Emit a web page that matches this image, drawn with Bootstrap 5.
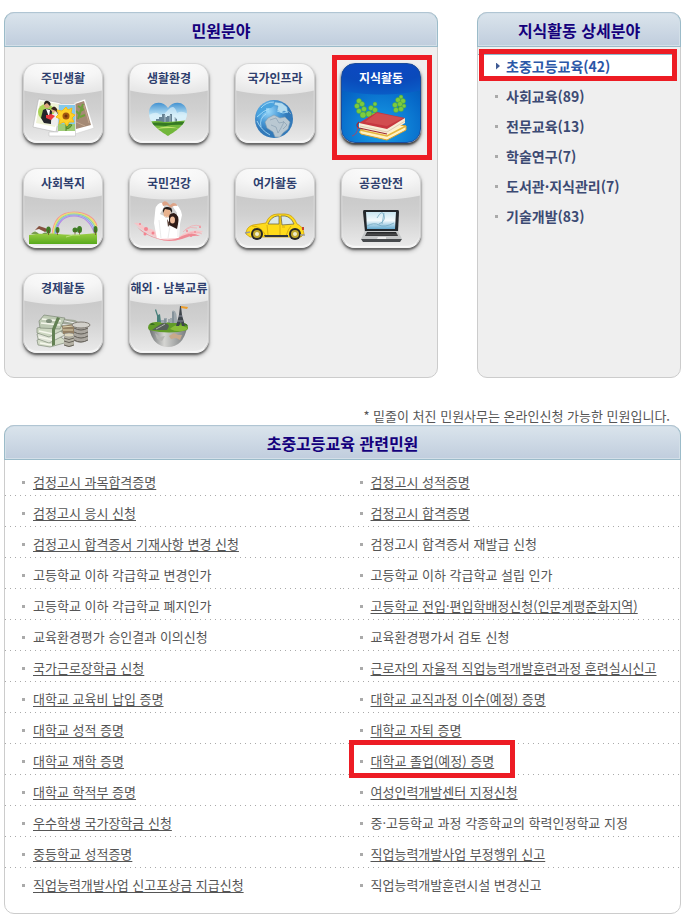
<!DOCTYPE html>
<html lang="ko">
<head>
<meta charset="utf-8">
<meta name="viewport" content="width=device-width, initial-scale=1">
<title>민원분야</title>
<link href="https://cdn.jsdelivr.net/npm/bootstrap@5.3.0/dist/css/bootstrap.min.css" rel="stylesheet">
<style>
  body { font-family: "Noto Sans CJK KR", sans-serif; font-size: 13px; line-height: 18px; color: #555; background: #fff; }
  .page { padding: 12px 7px 5px 4px; }
  .top-panels { display: grid; grid-template-columns: 434fr 204fr; column-gap: 39px; }
  .panel { border: 1px solid #ccc; border-radius: 10px; }
  .panel-gray { background: #efefef; min-height: 366px; }
  .panel-title { margin: -1px -1px 0; height: 35px; border: 1px solid #9bbbc9; border-top-color: #b0c5d3; border-radius: 10px 10px 0 0;
    background: linear-gradient(#dae4ec, #c0cddd); box-shadow: inset 0 0 0 1px #d3dfe8; font-size: 16px; line-height: 20px; color: #14007c; }
  .tiles { display: grid; grid-template-columns: repeat(4, 80px); justify-content: space-between; row-gap: 25px; padding: 16px 16px 0 18px; }
  .tile { height: 80px; border-radius: 14px; border: 1px solid #cfcfcf; border-top-color: #d8d8d8; border-bottom-color: #f4f4f4;
    background: radial-gradient(ellipse 80px 31px at 50% 0, #fdfdfd 0, #f6f6f6 50%, #e6e6e6 97%, transparent 100%), linear-gradient(#cacaca 28px, #d0d0d0 45px, #eaeaea);
    box-shadow: inset 0 -1px 1px #fafafa, 0 2px 2px #666, 0 3px 4px #aaa; color: #2f3f6e; font-size: 12px; line-height: 18px; padding-top: 5px; }
  .tile svg { width: 80px; height: 50px; margin: 4px -1px 0; flex: none; }
  .tile-on { color: #fff; border-color: #1a4c9c;
    background: radial-gradient(ellipse 80px 31px at 50% 0, #0d47c4 0, #0a4abb 60%, #0a5cc6 97%, transparent 100%), radial-gradient(circle at 50% 85%, #19a0e8, #0668c8 60%, #0448a8);
    box-shadow: 0 2px 2px #444, 0 3px 4px #999; }
  .frame { position: absolute; border: 5px solid #ed1c24; pointer-events: none; }
  .frame-tile { inset: -9px -12px -18px -10px; }
  .frame-side { inset: -2px 3px 0 1px; }
  .frame-link { inset: -12px -21px -8px -22px; }
  .side-list { padding-top: 4px; font-size: 14px; }
  .side-list li { height: 30px; padding-left: 17px; }
  .side-list a { color: #3c4a73; }
  .side-list .current { background: linear-gradient(#8eb8cc, #8eb8cc) 0 3px / 100% 1px no-repeat, linear-gradient(#fff, #fff) 0 4px no-repeat; margin-right: 8px; }
  .side-list .current .frame-side { right: -5px; }
  .side-list .current a { color: #2b57a7; }
  .dot { width: 3px; height: 3px; background: #aaa; margin-right: 8px; flex: none; }
  .arrow { width: 4px; height: 7px; background: #3f5a94; clip-path: polygon(0 0, 100% 50%, 0 100%); margin: 0 6px 0 1px; flex: none; }
  .note { margin: 29px 11px 0 0; }
  .services { padding: 5px 0 14px; }
  .services li { height: 31px; padding: 3px 0 0 17px;
    background: linear-gradient(90deg, #aaa 1px, transparent 1px) 0 100% / 5px 1px repeat-x; white-space: nowrap; }
  .services li:nth-last-child(-n+2) { background: none; }
  .services a { color: #555; text-underline-offset: 2px; }
</style>
</head>
<body>
<main class="page">
  <div class="top-panels">
    <section class="panel panel-gray">
      <h2 class="panel-title d-flex align-items-center justify-content-center fw-bold">민원분야</h2>
      <nav class="tiles" aria-label="민원분야">
        <a href="#" class="tile d-flex flex-column align-items-center fw-bold text-decoration-none">주민생활
          <svg viewBox="0 0 80 50" aria-hidden="true">
            <path d="M51 12 62 8 71 37 52 43Z" fill="#fff" stroke="#ccc" stroke-width=".5"/><path d="M52 13 61 10 68 34 53 38Z" fill="#a58a75"/>
            <path d="M55 28 60 13M56 23l-3-3M57 20l4-2M57 26l5-2M58 17l-3-2" stroke="#6da23a" stroke-width="2" fill="none"/><path d="M61 14 66 32M53 31l9 4" stroke="#c2a78f" fill="none"/>
            <path d="M15.500 8 38 12 33 41 10 36Z" fill="#fff" stroke="#aaa" stroke-width=".5"/><path d="M17 10 36 13 32 36 13 32Z" fill="#f0f3d7"/>
            <circle cx="23" cy="21" r="8" fill="#abd357"/><circle cx="24" cy="14" r="3" fill="#dda67d"/><path d="M21 14q0-5 4-4 4 2 2 5l-3-3Z" fill="#26201d"/>
            <path d="M20 19q5-3 9 1l-1 13-7-1-3-5Z" fill="#25262b"/><path d="m23 18 4 1-1 7Z" fill="#fff"/><circle cx="31" cy="19" r="2.500" fill="#e5b08b"/><path d="M28 18q3-5 6 0l1 6-2-4Z" fill="#35221d"/><path d="m29 23 5 0 2 12-8-1Z" fill="#eee"/><path d="m23 24 3 0 2-1 4 2-4 4-5-2Z" fill="#ed3a3f"/>
            <path d="M36 13H52.500V45H26V41H35Z" fill="#fff" stroke="#bbb" stroke-width=".5"/><path d="M36 14H52V40H35Z" fill="#85c9eb"/><path d="M35 33H52V40H35Z" fill="#9fcc77"/>
            <path d="M43 29V40M43 37q3-5 6-3-2 4-6 4" stroke="#55862a" fill="#72a63d"/>
            <path d="m43 16 2 3 4-2-1 5 4 2-3 3 2 4-5 0-2 4-3-4-5 2 1-5-4-2 3-3-2-4 5 1Z" fill="#ffd12a" stroke="#f5bb14"/><circle cx="43" cy="25" r="3.500" fill="#a4560f"/><circle cx="43" cy="25" r="1.500" fill="#6a340c"/>
          </svg></a>
        <a href="#" class="tile d-flex flex-column align-items-center fw-bold text-decoration-none">생활환경
          <svg viewBox="0 0 80 50" aria-hidden="true">
            <defs><clipPath id="heart"><path d="M39 45C33 41 20 34 20 22 20 10 34 9 39 17 44 9 58 10 58 22 58 34 45 41 39 45Z"/></clipPath>
            <linearGradient id="heartSky" x2="0" y2="1"><stop stop-color="#1d78c5"/><stop offset=".6" stop-color="#c5e9f7"/></linearGradient></defs>
            <g clip-path="url(#heart)"><path d="M18 8H60V36H18Z" fill="url(#heartSky)"/><path d="M20 24q7-4 10-1t9-4 9 3q5-3 11 1v8H20Z" fill="#e5f5fc" opacity=".6"/>
            <path d="M27 33V28h3v2-4h3v4-7h3v7-4h2v4-5h3v-2h2v8h3v-4l2 1v5-2h3v4Z" fill="#678395"/><path d="M36 24v8M41 24v8M46 26v6" stroke="#a9bec8"/>
            <path d="M18 31q8-2 17 0 12 0 25-2V46H18Z" fill="#72b73b"/><path d="M18 32q12-1 22 0 10-2 19-1v3q-16-1-22 1-9-1-19 0Z" fill="#357924"/><path d="M27 38q10-5 25 0-9-2-25 0" fill="#c4e270"/></g>
          </svg></a>
        <a href="#" class="tile d-flex flex-column align-items-center fw-bold text-decoration-none">국가인프라
          <svg viewBox="0 0 80 50" aria-hidden="true">
            <defs><radialGradient id="globe" cx=".35" cy=".3"><stop stop-color="#9ad8fa"/><stop offset=".6" stop-color="#4a9bd8"/><stop offset="1" stop-color="#3279b9"/></radialGradient></defs>
            <circle cx="39" cy="28" r="19" fill="url(#globe)"/>
            <path d="M23 19q5-7 12-8l5 3-4 3-5 0 0 4-4 2-2 5-3-3Z" fill="#4aa4df"/>
            <path d="m40 11 7 1 5 4 1 6-4-2-3 2-4-3 1-4-4-1Z" fill="#b3dbef" stroke="#4a92c6" stroke-width=".5"/>
            <path d="m33 27 6-3 6 3 5-1 5 5-2 7-5 4-3 4-5 0-2-5-6-4-2-6Z" fill="#b9c8d2" stroke="#7e9bb0" stroke-width=".6"/><path d="m35 29 6-2 3 5 5-1-3 6-3 5-2-6-5-2M48 30l4 4-4 4M53 20l3 3" stroke="#8fa5b6" stroke-width=".8" fill="none"/>
            <path d="M22 30q4 9 13 14M26 17q5-6 13-6M22 26q7-7 12-8M26 36q-2-9 5-13M42 20l6 2 5-1" stroke="#b2e2fa" stroke-width=".8" fill="none"/>
          </svg></a>
        <a href="#" class="tile tile-on position-relative d-flex flex-column align-items-center fw-bold text-decoration-none">지식활동
          <svg viewBox="0 0 80 50" aria-hidden="true">
            <path d="M28 27 18 10M27 26l7-13M57 20l2-14" stroke="#3f9c2c" stroke-width=".8"/>
            <g fill="#7ccb40" stroke="#48a52e" stroke-width=".4"><circle cx="18" cy="10" r="2.500"/><circle cx="16" cy="15" r="2.500"/><circle cx="21" cy="13" r="2.500"/><circle cx="18" cy="20" r="2.500"/><circle cx="23" cy="18" r="2.500"/><circle cx="22" cy="24" r="3"/><circle cx="28" cy="23" r="3"/><circle cx="34" cy="13" r="2"/><circle cx="30" cy="17" r="2.500"/><circle cx="34" cy="19" r="2.500"/><circle cx="33" cy="24" r="2.500"/>
            <circle cx="60" cy="6" r="2"/><circle cx="57" cy="9" r="2.500"/><circle cx="62" cy="10" r="2.500"/><circle cx="54" cy="14" r="2.500"/><circle cx="59" cy="13" r="2.500"/><circle cx="63" cy="15" r="2"/><circle cx="55" cy="19" r="2.500"/><circle cx="60" cy="18" r="2.500"/></g>
            <path d="M20 39 37 31 65 35v4L46 49 20 43q-3-2 0-4Z" fill="#fff2c3" stroke="#e2a526" stroke-width="1"/><path d="M19 39 46 45 65 35" stroke="#e5b53a" stroke-width="1.500" fill="none"/>
            <path d="M18 32v5L46 43 64 32V27Z" fill="#f8ecd6"/><path d="M19 35 46 41 64 30" stroke="#cbb89a" stroke-width=".6" fill="none"/>
            <path d="M18 32 36 21 64 27 46 38Z" fill="#c63740"/><path d="M36 22 62 27 46 35 24 31Z" fill="#da5c5c" opacity=".6"/>
            <path d="M18 31q-4 4 0 6L46 43" stroke="#9e2a35" stroke-width="1.200" fill="none"/><path d="M17 36q-1 8-6 9" stroke="#c9394e" stroke-width=".8" fill="none"/>
          </svg><span class="frame frame-tile"></span></a>
        <a href="#" class="tile d-flex flex-column align-items-center fw-bold text-decoration-none">사회복지
          <svg viewBox="0 0 80 50" aria-hidden="true">
            <defs><linearGradient id="grass" x2="0" y2="1"><stop stop-color="#9dcf45"/><stop offset="1" stop-color="#57a91d"/></linearGradient></defs>
            <g fill="none" stroke-width="1.200"><path d="M29 40C30 22 39 16 51 16S72 22 74 30" stroke="#f59a92"/><path d="M30 40C31 23 40 17 51 17S71 23 74 32" stroke="#f4e35f"/><path d="M31 40C32 24 40 18 51 18S70 24 74 35" stroke="#96d892"/><path d="M32 40C33 25 41 19 51 19S69 25 73 37" stroke="#86a9f1"/><path d="M33 40C34 26 41 20 51 20S68 26 72 39" stroke="#b58ae8"/></g>
            <path d="M6 39q15-3 29-1t39-1V48H6Z" fill="url(#grass)"/>
            <path d="M13 37V34l4-3 5 2v5Z" fill="#eee"/><path d="m12 34 4-4 6 2 4 2-4 2-6-3Z" fill="#85513f"/><path d="M8 38q4-5 8 0M19 38q3-3 6 0" fill="#7b9d51"/>
            <g fill="#3f7d25"><ellipse cx="25.500" cy="34" rx="2.300" ry="3.500"/><ellipse cx="34.500" cy="34" rx="2" ry="3"/><circle cx="52" cy="34" r="2.500"/><ellipse cx="56.500" cy="33.500" rx="2.500" ry="3.500"/><ellipse cx="72.500" cy="33.500" rx="2" ry="3.500"/></g><path d="M25.500 34v5M34.500 34v5M52 34v5M56.500 34v5M72.500 34v5" stroke="#694925" stroke-width=".7"/>
            <path d="M43 41q7-3 14-2" stroke="#bbe17a" fill="none"/>
          </svg></a>
        <a href="#" class="tile d-flex flex-column align-items-center fw-bold text-decoration-none">국민건강
          <svg viewBox="0 0 80 50" aria-hidden="true">
            <path d="M5 27q7-1 11 5 8 0 14 6 16 7 24 0 8-5 20-3-4 4-10 3-7 0-13 5-12 5-25-2Q14 35 5 27Z" fill="#fbc2c6" opacity=".8"/>
            <path d="M36 7 31 7Q26 9 26 17L25 27 28 43 50 42 51 28 53 19Q51 9 45 8L44 11 48 17 47 23 35 20 31 18 35 11Z" fill="#fff"/>
            <path d="M30 24 32 42M49 25l0 16M41 30 39 42" stroke="#ddd" stroke-width=".6"/>
            <path d="M33 7q2-3 5-1l3 3 3-2q4 0 4 3-4-1-6 2l-4-3-4 1Z" fill="#dda488"/>
            <ellipse cx="38" cy="17" rx="3.500" ry="5" fill="#e8b28e"/><path d="M34 17q-1-7 5-6 5 0 4 6l-2-3-5-1Z" fill="#241c19"/>
            <path d="M40 23q-1-6 5-6 6 2 4 11l-1 5-8-4Z" fill="#2e1c18"/><ellipse cx="43.500" cy="24" rx="2.500" ry="3.500" fill="#efbd9d"/><path d="M36 21q2 1 3 0" stroke="#fff"/><path d="m38 23 3 5-2 3Z" fill="#594137"/>
            <path d="M8 31q11 9 23 12t22-3q10-5 18 0-9-1-18 3-13 4-24 0Q15 39 8 31Z" fill="#ee8a94"/>
            <g fill="#f48490"><circle cx="11" cy="28" r="1"/><circle cx="17" cy="33" r="2"/><circle cx="16" cy="38" r="1.500"/><circle cx="24" cy="37" r="1.500"/><circle cx="58" cy="35" r="1"/><circle cx="66" cy="36" r="1"/><circle cx="71" cy="31" r="1"/><circle cx="62" cy="40" r="1"/></g><path d="M54 36q8-9 18-6M58 38q9-4 15 0M56 34q5-4 12-2" stroke="#f4a9af" stroke-width=".7" fill="none"/>
          </svg></a>
        <a href="#" class="tile d-flex flex-column align-items-center fw-bold text-decoration-none">여가활동
          <svg viewBox="0 0 80 50" aria-hidden="true">
            <path d="M11 38Q11 31 18 29L31 27Q34 18 43 18H50Q58 18 62 28 68 30 69 38L66 41H15Z" fill="#ffdb1a" stroke="#c99e0c" stroke-width=".8"/>
            <path d="M33 28q3-7 9-8h2v8ZM46 20h4q6 1 9 8l-12 1Z" fill="#dbe8e9" stroke="#736c42" stroke-width=".8"/><path d="M45 20v19M32 29 33 39M47 31h3M17 30q9 0 14 10M56 30q-3 3-5 10" stroke="#c79c0c" stroke-width=".7" fill="none"/>
            <path d="M29 39H53V41H30Z" fill="#30343b"/><circle cx="22" cy="38" r="6" fill="#252626"/><circle cx="60" cy="38" r="6" fill="#252626"/><circle cx="22" cy="38" r="4" fill="#c1a82d"/><circle cx="60" cy="38" r="4" fill="#c1a82d"/><circle cx="22" cy="38" r="2" fill="#f0eecb"/><circle cx="60" cy="38" r="2" fill="#f0eecb"/><path d="M67 31h2v3h-2Z" fill="#c9442c"/><path d="M10 37l5-1M65 39h5" stroke="#999" stroke-width="1.500"/>
          </svg></a>
        <a href="#" class="tile d-flex flex-column align-items-center fw-bold text-decoration-none">공공안전
          <svg viewBox="0 0 80 50" aria-hidden="true">
            <defs><linearGradient id="screen" x2="0" y2="1"><stop stop-color="#c9e5f0"/><stop offset=".5" stop-color="#f3fafc"/><stop offset="1" stop-color="#67acd1"/></linearGradient></defs>
            <path d="M23 14H57Q58 14 58 16L57 36H24L22 16Q22 14 23 14Z" fill="#23272b"/><path d="M25 16H55L54 33H26Z" fill="url(#screen)"/><path d="M26 30q7-4 12-1t15-2M36 22q5-9 7-3t-5 9M43 17l-2 11" stroke="#73a9c2" stroke-width=".8" fill="none"/>
            <path d="M24 35H57L61 43H20Z" fill="#c5c7c8"/><path d="M26 36H55L57 40H24Z" fill="#27292b"/><path d="M26 38H56M25 39H57" stroke="#777" stroke-width=".5"/><path d="M37 41h8v2h-9Z" fill="#eee"/><path d="M20 43H61L59 46H22Z" fill="#474a4d"/>
          </svg></a>
        <a href="#" class="tile d-flex flex-column align-items-center fw-bold text-decoration-none">경제활동
          <svg viewBox="0 0 80 50" aria-hidden="true">
            <path d="m34 17 18 2 5 3-6 12-18-4Z" fill="#a0a698"/><path d="m37 19 15 3M36 23l15 2M36 27l14 2" stroke="#eee"/>
            <g stroke="#727e6b" stroke-width=".6"><path d="M14 39 33 33 45 41 27 46 15 44Z" fill="#d4dcc8"/><path d="M14 33 34 27 42 34 26 42 15 38Z" fill="#e0e4d8"/><path d="M14 27 34 22 42 28 26 36 14 32Z" fill="#cdd7c1"/><path d="M16 20 21 14 42 17 37 28 17 27Z" fill="#becab4"/></g>
            <path d="M19 18 38 20M18 22 37 24M16 30 30 33M16 36 30 39M17 42l12 2" stroke="#f5f7ec" stroke-width="1.500"/><path d="m34 16-5 12v17l3-1V29l5-12Z" fill="#638153"/><ellipse cx="26" cy="20" rx="3" ry="2" fill="#7e8e79"/>
            <path d="M39 25 51 23 52 33H40Z" fill="#938064"/><path d="M40 26l10-1M40 29h10" stroke="#e1d6b2"/>
            <path d="M51 25V40q7 4 14-1V24Z" fill="#aaa69f"/><path d="M51 27q7 4 14 0M51 31q7 4 14 0M51 35q7 4 14 0M51 39q7 4 14 0" stroke="#625f58" stroke-width="1" fill="none"/><ellipse cx="58" cy="24" rx="9" ry="3" fill="#d2d0ca" stroke="#827d75"/>
            <path d="M41 34V44q5 4 10 0V34Z" fill="#b5b2a5"/><path d="M41 37q5 3 10 0M41 40q5 3 10 0M41 44q5 3 10 0" stroke="#67645b" fill="none"/><ellipse cx="46" cy="34" rx="5" ry="2" fill="#ddd7bf" stroke="#888" stroke-width=".6"/>
          </svg></a>
        <a href="#" class="tile d-flex flex-column align-items-center fw-bold text-decoration-none text-nowrap">해외 · 남북교류
          <svg viewBox="0 0 80 50" aria-hidden="true">
            <defs><linearGradient id="bowl"><stop stop-color="#686c6e"/><stop offset=".4" stop-color="#d5d5d2"/><stop offset="1" stop-color="#777b7d"/></linearGradient></defs>
            <path d="M20 27H58Q54 46 39 46T20 27Z" fill="url(#bowl)"/><path d="m40 35 5-3 4 2 4 0-2 5-4-2-5 1Z" fill="#c8a98b"/><path d="M26 32l5 4 5-1-3 5-5-2Z" fill="#b4b5b2"/>
            <path d="M19 27q0-6 8-6l29 1q5 4 2 7-17 5-38 0Z" fill="#619b29"/><path d="M23 29Q31 23 35 22q8 1 3 7Z" fill="#555e58"/><path d="M27 28q6-3 9-5" stroke="#eee" stroke-width=".6"/><path d="M41 28q7-7 15-2 4 1 1 3-8 3-16-1" fill="#88bc37"/>
            <path d="m28 21 0-6-2-6 1-1 2 6 2-1 1 8Z" fill="#477f7a"/><path d="M32 22v-3h3v-2h3v5h3V17h2V10q5-3 5 12Z" fill="#9da7ad"/><path d="M44 11v11M36 18v4M40 18v4" stroke="#6d7d87"/>
            <path d="M51 5h1l1 9 3 11h-3l-1-4-2 4h-3l3-11Z" fill="#3e454b"/><path d="M49 15h5M48 20h6" stroke="#aab" stroke-width=".7"/><path d="m52 5 7 1-1 2-6-1Z" fill="#ed9c29"/><path d="M21 24q2-4 5 0M55 24q2-3 4 1" fill="#396c21"/>
          </svg></a>
      </nav>
    </section>

    <section class="panel panel-gray">
      <h2 class="panel-title d-flex align-items-center justify-content-center fw-bold">지식활동 상세분야</h2>
      <ul class="side-list list-unstyled mb-0 fw-bold">
        <li class="current position-relative d-flex align-items-center"><span class="arrow"></span><a class="text-decoration-none" href="#">초중고등교육(42)</a><span class="frame frame-side"></span></li>
        <li class="d-flex align-items-center"><span class="dot"></span><a class="text-decoration-none" href="#">사회교육(89)</a></li>
        <li class="d-flex align-items-center"><span class="dot"></span><a class="text-decoration-none" href="#">전문교육(13)</a></li>
        <li class="d-flex align-items-center"><span class="dot"></span><a class="text-decoration-none" href="#">학술연구(7)</a></li>
        <li class="d-flex align-items-center"><span class="dot"></span><a class="text-decoration-none" href="#">도서관·지식관리(7)</a></li>
        <li class="d-flex align-items-center"><span class="dot"></span><a class="text-decoration-none" href="#">기술개발(83)</a></li>
      </ul>
    </section>
  </div>

  <p class="note text-end">* 밑줄이 처진 민원사무는 온라인신청 가능한 민원입니다.</p>

  <section class="panel">
    <h2 class="panel-title d-flex align-items-center justify-content-center fw-bold mb-0">초중고등교육 관련민원</h2>
    <ul class="services row row-cols-2 g-0 list-unstyled mb-0">
      <li class="d-flex align-items-center"><span class="dot"></span><a href="#">검정고시 과목합격증명</a></li>
      <li class="d-flex align-items-center"><span class="dot"></span><a href="#">검정고시 성적증명</a></li>
      <li class="d-flex align-items-center"><span class="dot"></span><a href="#">검정고시 응시 신청</a></li>
      <li class="d-flex align-items-center"><span class="dot"></span><a href="#">검정고시 합격증명</a></li>
      <li class="d-flex align-items-center"><span class="dot"></span><a href="#">검정고시 합격증서 기재사항 변경 신청</a></li>
      <li class="d-flex align-items-center"><span class="dot"></span>검정고시 합격증서 재발급 신청</li>
      <li class="d-flex align-items-center"><span class="dot"></span>고등학교 이하 각급학교 변경인가</li>
      <li class="d-flex align-items-center"><span class="dot"></span>고등학교 이하 각급학교 설립 인가</li>
      <li class="d-flex align-items-center"><span class="dot"></span>고등학교 이하 각급학교 폐지인가</li>
      <li class="d-flex align-items-center"><span class="dot"></span><a href="#">고등학교 전입·편입학배정신청(인문계평준화지역)</a></li>
      <li class="d-flex align-items-center"><span class="dot"></span>교육환경평가 승인결과 이의신청</li>
      <li class="d-flex align-items-center"><span class="dot"></span>교육환경평가서 검토 신청</li>
      <li class="d-flex align-items-center"><span class="dot"></span><a href="#">국가근로장학금 신청</a></li>
      <li class="d-flex align-items-center"><span class="dot"></span><a href="#">근로자의 자율적 직업능력개발훈련과정 훈련실시신고</a></li>
      <li class="d-flex align-items-center"><span class="dot"></span><a href="#">대학교 교육비 납입 증명</a></li>
      <li class="d-flex align-items-center"><span class="dot"></span><a href="#">대학교 교직과정 이수(예정) 증명</a></li>
      <li class="d-flex align-items-center"><span class="dot"></span><a href="#">대학교 성적 증명</a></li>
      <li class="d-flex align-items-center"><span class="dot"></span><a href="#">대학교 자퇴 증명</a></li>
      <li class="d-flex align-items-center"><span class="dot"></span><a href="#">대학교 재학 증명</a></li>
      <li class="d-flex align-items-center"><span class="dot"></span><span class="position-relative"><a href="#">대학교 졸업(예정) 증명</a><span class="frame frame-link"></span></span></li>
      <li class="d-flex align-items-center"><span class="dot"></span><a href="#">대학교 학적부 증명</a></li>
      <li class="d-flex align-items-center"><span class="dot"></span><a href="#">여성인력개발센터 지정신청</a></li>
      <li class="d-flex align-items-center"><span class="dot"></span><a href="#">우수학생 국가장학금 신청</a></li>
      <li class="d-flex align-items-center"><span class="dot"></span>중·고등학교 과정 각종학교의 학력인정학교 지정</li>
      <li class="d-flex align-items-center"><span class="dot"></span><a href="#">중등학교 성적증명</a></li>
      <li class="d-flex align-items-center"><span class="dot"></span><a href="#">직업능력개발사업 부정행위 신고</a></li>
      <li class="d-flex align-items-center"><span class="dot"></span><a href="#">직업능력개발사업 신고포상금 지급신청</a></li>
      <li class="d-flex align-items-center"><span class="dot"></span>직업능력개발훈련시설 변경신고</li>
    </ul>
  </section>
</main>
<script src="https://cdn.jsdelivr.net/npm/bootstrap@5.3.0/dist/js/bootstrap.bundle.min.js"></script>
</body>
</html>
